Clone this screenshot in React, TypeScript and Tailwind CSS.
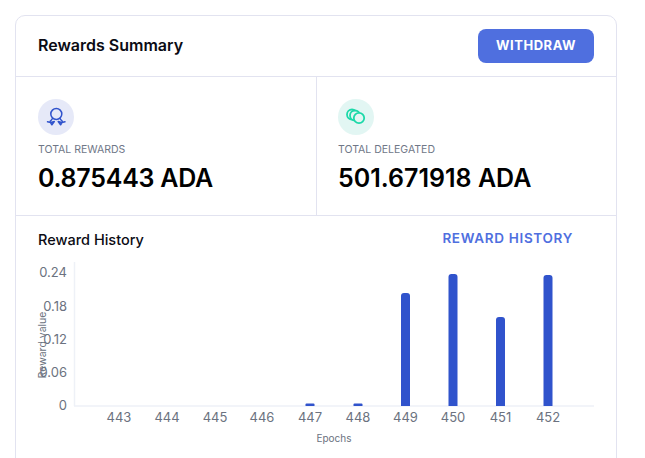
const ticksY = [
  { label: "0.24", y: 277 },
  { label: "0.18", y: 311 },
  { label: "0.12", y: 344 },
  { label: "0.06", y: 377 },
  { label: "0", y: 410 },
];

const bars = [
  { epoch: "443", x: 119, top: 406 },
  { epoch: "444", x: 167, top: 406 },
  { epoch: "445", x: 215, top: 406 },
  { epoch: "446", x: 262, top: 406 },
  { epoch: "447", x: 310, top: 404 },
  { epoch: "448", x: 358, top: 404 },
  { epoch: "449", x: 405.5, top: 293 },
  { epoch: "450", x: 453, top: 274 },
  { epoch: "451", x: 500.5, top: 317 },
  { epoch: "452", x: 548, top: 275 },
];

function RewardChart() {
  // viewBox uses page coords, so the numbers read straight off the screenshot
  return (
    <svg width="600" height="203" viewBox="16 255 600 203" className="block">
      <line x1="74.5" y1="262" x2="74.5" y2="406" stroke="#eef1f7" strokeWidth="1.5" />
      <line x1="74" y1="406" x2="594" y2="406" stroke="#eef1f7" strokeWidth="1.5" />
      {ticksY.map((t) => (
        <text key={t.label} x="67" y={t.y} textAnchor="end" fontSize="13" fill="#6b7280" fontFamily="Inter, sans-serif">
          {t.label}
        </text>
      ))}
      {bars.map((b) => (
        <g key={b.epoch}>
          {b.top < 406 && (
            <path
              d={
                406 - b.top < 4
                  ? `M${b.x - 4.5} 406v-1.5a1 1 0 0 1 1-1h7a1 1 0 0 1 1 1V406z`
                  : `M${b.x - 4.5} 406V${b.top + 3}a3 3 0 0 1 3-3h3a3 3 0 0 1 3 3V406z`
              }
              fill="#3053cc"
            />
          )}
          <text x={b.x} y="422" textAnchor="middle" fontSize="13" fill="#6b7280" fontFamily="Inter, sans-serif">
            {b.epoch}
          </text>
        </g>
      ))}
      <text x="334" y="442" textAnchor="middle" fontSize="10" fill="#6b7280" fontFamily="Inter, sans-serif">
        Epochs
      </text>
      <text
        transform="translate(46 345) rotate(-90)"
        textAnchor="middle"
        fontSize="10.5"
        fill="#6b7280"
        fontFamily="Inter, sans-serif"
      >
        Reward value
      </text>
    </svg>
  );
}

function AwardIcon() {
  return (
    <svg width="24" height="24" viewBox="0 0 24 24" fill="none" stroke="#3053cc" strokeWidth="1.5" strokeLinecap="round" strokeLinejoin="round">
      <circle cx="12.3" cy="9" r="5.5" />
      <path d="M8.5 13.5c-.6 1.2-1.4 2-2.4 2.8" />
      <path d="M16 13.5c.6 1.2 1.4 2 2.4 2.8" />
      <path d="M3.5 16.8l3.2.6 3.6-.8-2.4 3.2-1.6-2.4" />
      <path d="M21 16.8l-3.2.6-3.6-.8 2.4 3.2 1.6-2.4" />
    </svg>
  );
}

function CoinsIcon() {
  return (
    <svg width="24" height="24" viewBox="0 0 24 24" fill="none" stroke="#1cd9a9" strokeWidth="1.8">
      <circle cx="8" cy="9.5" r="5" />
      <circle cx="11" cy="10.5" r="5" fill="#e2f6f3" />
      <circle cx="15" cy="13" r="5.2" fill="#e2f6f3" />
    </svg>
  );
}

function Stat({ icon, tint, label, value, className, valueClass }: { icon: React.ReactNode; tint: string; label: string; value: string; className: string; valueClass: string }) {
  return (
    <div className={`pt-[22px] ${className}`}>
      <div className={`w-9 h-9 rounded-full flex items-center justify-center ${tint}`}>{icon}</div>
      <p className="mt-[9px] text-[10.5px] leading-[12px] text-[#6f7787]">{label}</p>
      <p className={`mt-[7px] text-[25px] leading-[30px] font-semibold text-black ${valueClass}`}>{value}</p>
    </div>
  );
}

export default function App() {
  return (
    <div className="h-[458px] w-[645px] overflow-hidden bg-white pl-[15px] pt-[15px] font-['Inter',sans-serif]">
      <div className="w-[602px] h-[520px] border border-[#e2e3f0] rounded-[10px]">
        {/* Header */}
        <div className="h-[61px] flex items-center justify-between px-[22px] border-b border-[#e2e3f0]">
          <h1 className="pb-[2px] text-[16px] font-semibold text-[#0b0b14]">Rewards Summary</h1>
          <button className="w-[116px] h-[34px] rounded-lg bg-[#4f6fdf] text-white text-[13px] font-bold tracking-[0.04em]">
            WITHDRAW
          </button>
        </div>

        {/* Stats */}
        <div className="h-[139px] flex border-b border-[#e2e3f0]">
          <Stat
            icon={<AwardIcon />}
            tint="bg-[#e6e9f8]"
            label="TOTAL REWARDS"
            value="0.875443 ADA"
            className="w-[301px] flex-none pl-[22px] border-r border-[#e2e3f0]"
            valueClass="tracking-[-0.01em]"
          />
          <Stat
            icon={<CoinsIcon />}
            tint="bg-[#e2f6f3]"
            label="TOTAL DELEGATED"
            value="501.671918 ADA"
            className="flex-1 pl-[21px]"
            valueClass="tracking-normal"
          />
        </div>

        {/* History */}
        <div className="flex items-center justify-between pl-[22px] pr-[43px] pt-[8px] h-[39px]">
          <h2 className="text-[14.5px] font-medium text-[#0b0b14]">Reward History</h2>
          <a className="pb-[2px] text-[13.5px] font-semibold text-[#4f6fdf] tracking-[0.05em]">REWARD HISTORY</a>
        </div>
        <RewardChart />
      </div>
    </div>
  );
}
